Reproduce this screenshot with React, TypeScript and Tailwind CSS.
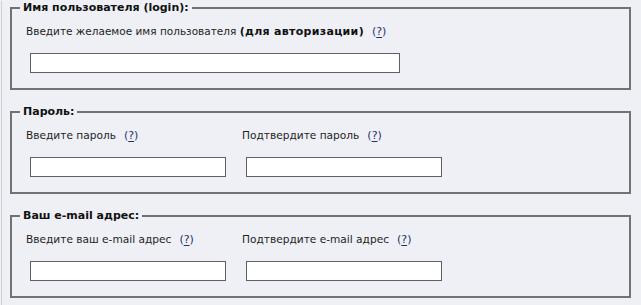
import React from 'react';

function Help() {
  return (
    <span className="ml-[8px] text-[11px] text-[#24306b]">
      (<span className="underline underline-offset-2">?</span>)
    </span>
  );
}

function Field({ label }: { label: React.ReactNode }) {
  return (
    <div className="w-[216px] shrink-0">
      <div className="h-[14px] leading-[14px] text-[10.6px] text-[#1e1e1e]">{label}</div>
      <input
        type="text"
        className="mt-[15px] ml-[4px] block h-[20px] w-[196px] border border-[#5e5e6c] bg-white outline-none"
      />
    </div>
  );
}

function Box({ title, children }: { title: string; children: React.ReactNode }) {
  return (
    <fieldset className="ml-[8px] mr-[10px] mt-[15px] first:mt-px border-2 border-[#727272] pl-[8px] pb-[15px]">
      <legend className="px-[3px] h-[14px] leading-[14px] font-bold text-[#111]">{title}</legend>
      <div className="pl-[6px] pt-[9px]">{children}</div>
    </fieldset>
  );
}

export default function App() {
  return (
    <div
      className="w-[641px] h-[305px] overflow-hidden bg-[#eef0f5] text-[11px]"
      style={{ fontFamily: '"DejaVu Sans", Verdana, sans-serif' }}
    >
      <div className="ml-px h-full border-l border-[#cfd0d6]">
        <Box title="Имя пользователя (login):">
          <div className="h-[14px] leading-[14px] text-[10.5px] text-[#1e1e1e]">
            Введите желаемое имя пользователя{' '}
            <b className="text-[11px] tracking-[0.3px] text-[#111]">(для авторизации)</b>
            <Help />
          </div>
          <input
            type="text"
            className="mt-[15px] ml-[4px] block h-[20px] w-[370px] border border-[#5e5e6c] bg-white outline-none"
          />
        </Box>

        <Box title="Пароль:">
          <div className="flex">
            <Field label={<>Введите пароль<Help /></>} />
            <Field label={<>Подтвердите пароль<Help /></>} />
          </div>
        </Box>

        <Box title="Ваш e-mail адрес:">
          <div className="flex">
            <Field label={<>Введите ваш e-mail адрес<Help /></>} />
            <Field label={<>Подтвердите e-mail адрес<Help /></>} />
          </div>
        </Box>
      </div>
    </div>
  );
}
